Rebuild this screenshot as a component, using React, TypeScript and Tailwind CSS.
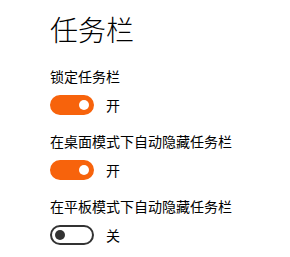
import React, { useState } from "react";

type Item = { label: string; on: boolean };

const initial: Item[] = [
  { label: "锁定任务栏", on: true },
  { label: "在桌面模式下自动隐藏任务栏", on: true },
  { label: "在平板模式下自动隐藏任务栏", on: false },
];

function Toggle({ on, onClick }: { on: boolean; onClick: () => void }) {
  return (
    <button
      type="button"
      onClick={onClick}
      className="flex items-center gap-3 text-[14px] leading-5 text-black"
    >
      <span
        className={`flex h-5 w-11 items-center rounded-full border-2 px-[3px] ${
          on ? "justify-end border-[#f7630c] bg-[#f7630c]" : "justify-start border-[#333333] bg-white"
        }`}
      >
        <span className={`h-2.5 w-2.5 rounded-full ${on ? "bg-white" : "bg-[#333333]"}`} />
      </span>
      <span>{on ? "开" : "关"}</span>
    </button>
  );
}

export default function App() {
  const [items, setItems] = useState(initial);

  return (
    <div
      className="h-[257px] w-[290px] bg-white pl-[50px] pt-[11px] text-black"
      style={{ fontFamily: '"Noto Sans CJK SC", "Noto Sans", sans-serif' }}
    >
      <h1 className="text-[28px] font-light leading-9">任务栏</h1>
      <div className="mt-[19px] flex flex-col gap-[16px]">
        {items.map((item, i) => (
          <div key={i} className="flex flex-col items-start gap-[9px]">
            <p className="text-[14px] leading-5">{item.label}</p>
            <Toggle
              on={item.on}
              onClick={() =>
                setItems((prev) => prev.map((x, j) => (j === i ? { ...x, on: !x.on } : x)))
              }
            />
          </div>
        ))}
      </div>
    </div>
  );
}
